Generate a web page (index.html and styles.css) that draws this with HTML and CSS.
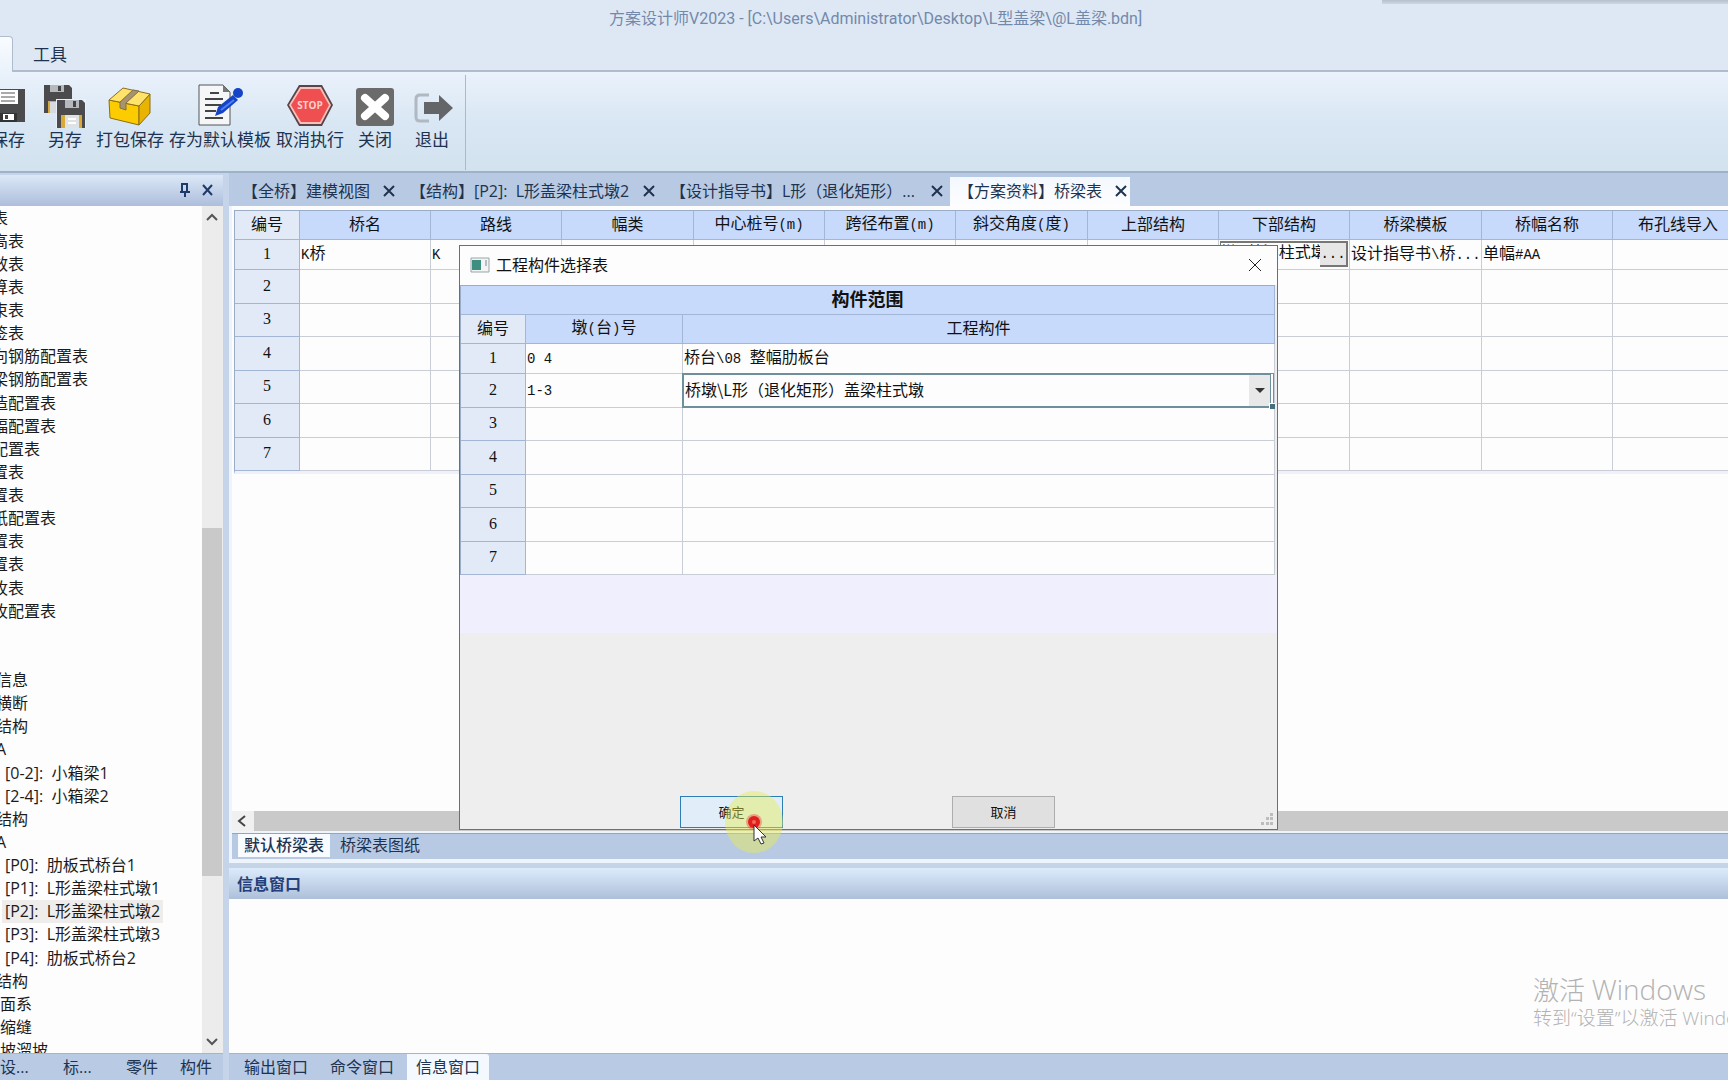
FILE: index.html
```html
<!DOCTYPE html>
<html lang="zh-CN">
<head>
<meta charset="utf-8">
<title>方案设计师V2023</title>
<link rel="stylesheet" href="styles.css">
</head>
<body>
<header class="titlebar">
  <div class="title">方案设计师V2023 - [C:\Users\Administrator\Desktop\L型盖梁\@L盖梁.bdn]</div>
  <nav class="ribbon-tabs">
    <span class="ribbon-tab-active"></span>
    <a class="ribbon-tab" href="#tools">工具</a>
  </nav>
  <div class="screen-edge"></div>
</header>

<div class="ribbon">
  <div class="ribbon-group">
    <button class="tool"><svg width="48" height="44" viewBox="0 0 48 44"><path d="M7 5h34v33H7z" fill="#4b4b4d"/><path d="M14 6h20v14H14z" fill="#fff"/><path d="M17 9h14M17 13h14M17 17h14" stroke="#555"/><path d="M15 29h18v9H15z" fill="#333"/><path d="M19 30h11v6H19z" fill="#fff"/><path d="M21 31h3v4h-3z" fill="#444"/></svg><span>保存</span></button>
    <button class="tool"><svg width="48" height="44" viewBox="0 0 48 44"><path d="M3 1h25l3 3v25H3z" fill="#4b4b4d"/><path d="M9 1h14v7H9z" fill="#b5b8bc"/><path d="M17 2h3v5h-3z" fill="#444"/><path d="M7 17h10v12H7z" fill="#d9a93a"/><path d="M9 18h8v11H9z" fill="#d8dbdd"/><path d="M15 15h30v29H15z" fill="#e9f0f8"/><path d="M16 16h25l3 3v25H16z" fill="#4b4b4d"/><path d="M24 16h14v8H24z" fill="#b5b8bc"/><path d="M32 17h3v6h-3z" fill="#444"/><path d="M20 31h21v13H20z" fill="#d9a93a"/><path d="M24 31h14v13H24z" fill="#dfe2e4"/><path d="M27 35h8M27 39h8" stroke="#fff" stroke-width="2"/></svg><span>另存</span></button>
    <button class="tool"><svg width="48" height="44" viewBox="0 0 48 44"><g stroke="#8a6d1a" stroke-linejoin="round"><path d="M3 16l30 6v19L4 34z" fill="#fccb00"/><path d="M33 22l11-12v19L33 41z" fill="#e9b400"/><path d="M3 16L17 4l27 6-11 12z" fill="#ffe36b"/></g><path d="M14 18l13-12 6 1-13 12v7l-6-2z" fill="#a8946c" stroke="#806d4a"/></svg><span>打包保存</span></button>
    <button class="tool"><svg width="48" height="44" viewBox="0 0 48 44"><path d="M3 1h24l7 7v33H3z" fill="#f4f6f8" stroke="#555"/><path d="M27 1v7h7z" fill="#777"/><path d="M14 9h9M9 15h18M9 21h16M9 27h11M9 34h18" stroke="#444" stroke-width="2"/><path d="M19 32l3-9L37 11l5 5-15 13z" fill="#1443c8"/><circle cx="42" cy="9" r="5" fill="#1443c8"/><path d="M25 26l13-10" stroke="#4e7ff0" stroke-width="2"/></svg><span>存为默认模板</span></button>
    <button class="tool"><svg width="48" height="44" viewBox="0 0 48 44"><path d="M13 1h23l11 20-11 21H13L1 21z" fill="#5a4448"/><path d="M14 3h21l10 18-10 19H14L3 21z" fill="#f9c0bc"/><path d="M15 5h19l9 16-9 17H15L5 21z" fill="#ef4f50"/><text x="24" y="25" text-anchor="middle" class="stop-text">STOP</text></svg><span>取消执行</span></button>
    <button class="tool"><svg width="48" height="44" viewBox="0 0 48 44"><rect x="5" y="4" width="38" height="38" rx="3" fill="#6b6b6c"/><path d="M14 14l20 18M34 14L14 32" stroke="#fff" stroke-width="8" stroke-linecap="round"/></svg><span>关闭</span></button>
    <button class="tool"><svg width="48" height="44" viewBox="0 0 48 44"><path d="M21 11h-9q-4 0-4 4v18q0 4 4 4h9" fill="none" stroke="#b0b8c2" stroke-width="3"/><path d="M16 18h15v-7l14 13-14 13v-7H16z" fill="#646568"/></svg><span>退出</span></button>
  </div>
</div>

<div class="workspace">
  <aside class="side">
    <div class="side-head">
      <svg width="12" height="16" viewBox="0 0 12 16"><path d="M3 9V2h5v7M8 1v8M1 10h10M6 10v5" fill="none" stroke="#1d3a6b" stroke-width="2"/></svg>
      <svg width="12" height="12" viewBox="0 0 12 12"><path d="M1 1l9 10M10 1L1 11" stroke="#1d3a6b" stroke-width="2"/></svg>
    </div>
    <div class="side-body">
      <ul class="tree">
        <li>表</li><li>高表</li><li>效表</li><li>算表</li><li>束表</li><li>签表</li><li>向钢筋配置表</li><li>梁钢筋配置表</li><li>造配置表</li><li>幅配置表</li><li>配置表</li><li>置表</li><li>置表</li><li>纸配置表</li><li>置表</li><li>置表</li><li>枚表</li><li>枚配置表</li><li></li><li></li>
        <li class="l1">信息</li><li class="l1">横断</li><li class="l1">结构</li><li class="l1">A</li>
        <li class="l3">[0-2]:&nbsp; 小箱梁1</li><li class="l3">[2-4]:&nbsp; 小箱梁2</li>
        <li class="l1">结构</li><li class="l1">A</li>
        <li class="l3">[P0]:&nbsp; 肋板式桥台1</li><li class="l3">[P1]:&nbsp; L形盖梁柱式墩1</li><li class="l3"><span class="picked">[P2]:&nbsp; L形盖梁柱式墩2</span></li><li class="l3">[P3]:&nbsp; L形盖梁柱式墩3</li><li class="l3">[P4]:&nbsp; 肋板式桥台2</li>
        <li class="l1">结构</li><li class="l2">面系</li><li class="l2">缩缝</li><li class="l2">坡溜坡</li>
      </ul>
      <div class="vscroll">
        <svg width="20" height="20" viewBox="0 0 20 20"><path d="M5 14l5-5 5 5" fill="none" stroke="#555" stroke-width="2"/></svg>
        <div class="vthumb"></div>
        <svg width="20" height="20" viewBox="0 0 20 20"><path d="M5 6l5 5 5-5" fill="none" stroke="#555" stroke-width="2"/></svg>
      </div>
    </div>
    <nav class="side-tabs"><a href="#s">设...</a><a href="#b">标...</a><a href="#l">零件</a><a href="#g">构件</a></nav>
  </aside>

  <main class="main">
    <nav class="doc-tabs">
      <a href="#t1">【全桥】建模视图<svg width="12" height="12" viewBox="0 0 12 12"><path d="M1 1l10 10M11 1L1 11" stroke="#1f3350" stroke-width="2"/></svg></a>
      <a href="#t2">【结构】[P2]:&nbsp; L形盖梁柱式墩2<svg width="12" height="12" viewBox="0 0 12 12"><path d="M1 1l10 10M11 1L1 11" stroke="#1f3350" stroke-width="2"/></svg></a>
      <a href="#t3">【设计指导书】L形（退化矩形）...<svg width="12" height="12" viewBox="0 0 12 12"><path d="M1 1l10 10M11 1L1 11" stroke="#1f3350" stroke-width="2"/></svg></a>
      <a href="#t4" class="on">【方案资料】桥梁表<svg width="12" height="12" viewBox="0 0 12 12"><path d="M1 1l10 10M11 1L1 11" stroke="#1f3350" stroke-width="2"/></svg></a>
    </nav>
    <div class="sheet">
      <table class="grid bridge">
        <thead><tr><th class="corner">编号</th><th>桥名</th><th>路线</th><th>幅类</th><th>中心桩号<i>(m)</i></th><th>跨径布置<i>(m)</i></th><th>斜交角度<i>(</i>度<i>)</i></th><th>上部结构</th><th>下部结构</th><th>桥梁模板</th><th>桥幅名称</th><th>布孔线导入</th></tr></thead>
        <tbody>
          <tr><th>1</th><td><i>K</i>桥</td><td><i>K</i></td><td></td><td></td><td></td><td></td><td></td><td><div class="editor"><input aria-label="下部结构" value="墩\ 盖梁柱式墩2"><button>...</button></div></td><td>设计指导书<i>\</i>桥<i>...</i></td><td>单幅<i>#AA</i></td><td></td></tr>
          <tr><th>2</th><td></td><td></td><td></td><td></td><td></td><td></td><td></td><td></td><td></td><td></td><td></td></tr>
          <tr><th>3</th><td></td><td></td><td></td><td></td><td></td><td></td><td></td><td></td><td></td><td></td><td></td></tr>
          <tr><th>4</th><td></td><td></td><td></td><td></td><td></td><td></td><td></td><td></td><td></td><td></td><td></td></tr>
          <tr><th>5</th><td></td><td></td><td></td><td></td><td></td><td></td><td></td><td></td><td></td><td></td><td></td></tr>
          <tr><th>6</th><td></td><td></td><td></td><td></td><td></td><td></td><td></td><td></td><td></td><td></td><td></td></tr>
          <tr><th>7</th><td></td><td></td><td></td><td></td><td></td><td></td><td></td><td></td><td></td><td></td><td></td></tr>
        </tbody>
      </table>
    </div>
    <div class="hscroll"><svg width="22" height="20" viewBox="0 0 22 20"><path d="M13 5l-6 5 6 5" fill="none" stroke="#444" stroke-width="2"/></svg></div>
    <nav class="sheet-tabs"><a class="on" href="#d">默认桥梁表</a><a href="#p">桥梁表图纸</a></nav>
    <section class="info">
      <h2>信息窗口</h2>
      <div class="info-body"></div>
    </section>
    <nav class="bottom-tabs"><a href="#o">输出窗口</a><a href="#c">命令窗口</a><a class="on" href="#i">信息窗口</a></nav>
  </main>
</div>

<div class="watermark"><p class="wm-big">激活 <span>Windows</span></p><p>转到“设置”以激活 Windows。</p></div>

<div class="dialog" role="dialog" aria-labelledby="dlg-title">
  <div class="dlg-head">
    <svg width="20" height="16" viewBox="0 0 20 16"><path d="M1 1h18v14H1z" fill="#f4f4f4" stroke="#9aa3a8"/><path d="M2 3h9v10H2z" fill="#3f8f80"/><path d="M16 3v6" stroke="#789"/></svg>
    <span id="dlg-title">工程构件选择表</span>
    <button class="dlg-close" aria-label="close"><svg width="14" height="14" viewBox="0 0 14 14"><path d="M1 1l12 12M13 1L1 13" stroke="#222"/></svg></button>
  </div>
  <table class="grid parts">
    <colgroup><col class="c-no"><col class="c-pier"><col></colgroup>
    <thead>
      <tr><th colspan="3" class="caption">构件范围</th></tr>
      <tr><th class="corner">编号</th><th>墩<i>(</i>台<i>)</i>号</th><th>工程构件</th></tr>
    </thead>
    <tbody>
      <tr><th>1</th><td><i>0 4</i></td><td>桥台<i>\08 </i>整幅肋板台</td></tr>
      <tr><th>2</th><td><i>1-3</i></td><td class="active"><div class="combo"><select aria-label="工程构件"><option>桥墩\L形（退化矩形）盖梁柱式墩</option></select><span class="combo-arrow"></span><span class="handle"></span></div></td></tr>
      <tr><th>3</th><td></td><td></td></tr>
      <tr><th>4</th><td></td><td></td></tr>
      <tr><th>5</th><td></td><td></td></tr>
      <tr><th>6</th><td></td><td></td></tr>
      <tr><th>7</th><td></td><td></td></tr>
    </tbody>
  </table>
  <div class="dlg-fill"></div>
  <div class="dlg-actions"><button class="primary">确定</button><button>取消</button></div>
  <svg class="grip" width="14" height="14" viewBox="0 0 14 14"><path d="M10 1h3v3h-3zM10 5h3v3h-3zM6 5h3v3H6zM10 10h3v3h-3zM6 10h3v3H6zM1 10h3v3H1z" fill="#bdbdbd"/></svg>
</div>

<svg class="pointer" width="62" height="64" viewBox="0 0 62 64"><ellipse cx="31" cy="31" rx="29" ry="31" fill="#e6ea50" fill-opacity=".45"/><circle cx="31" cy="31" r="8" fill="#e83a3a" fill-opacity=".4"/><circle cx="31" cy="31" r="6" fill="#e01f1f"/><circle cx="31" cy="31" r="2" fill="#f06a55"/><path d="M31 34v16l4-3 3 6 3-1-3-6h5z" fill="#fff" stroke="#333"/></svg>
</body>
</html>
```
FILE: styles.css
```css
* { box-sizing: border-box; }

body {
  margin: 0;
  height: 100vh;
  display: flex;
  flex-direction: column;
  overflow: hidden;
  position: relative;
  background: #c5d4e8;
  color: #1d3350;
  font: 16px/22px "Open Sans", "Noto Sans CJK SC", sans-serif;
}

a { color: inherit; text-decoration: none; }
button, input, select { font: inherit; color: inherit; margin: 0; padding: 0; }
svg { display: block; flex: none; }

/* title bar */
.titlebar {
  flex: none;
  height: 72px;
  display: flex;
  flex-direction: column;
  justify-content: space-between;
  position: relative;
  background: #dee8f4;
  border-bottom: 2px solid #afbccb;
}
.title {
  padding: 7px 0 0 609px;
  font: 16px/24px Roboto, "Noto Sans CJK SC", sans-serif;
  color: #7389ab;
  white-space: nowrap;
}
.screen-edge {
  position: absolute;
  top: 0;
  right: 0;
  width: 20%;
  height: 4px;
  background: linear-gradient(#b4bfce, #ced8e4);
}
.ribbon-tabs { display: flex; align-items: stretch; height: 36px; margin-bottom: -2px; }
.ribbon-tab-active {
  width: 13px;
  background: linear-gradient(#f9fcff, #eaf2fb);
  border: 1px solid #afbccb;
  border-width: 1px 1px 0 0;
  border-radius: 0 4px 0 0;
}
.ribbon-tab { padding: 8px 20px 0; font-size: 17px; }

/* ribbon */
.ribbon {
  flex: none;
  height: 101px;
  padding-top: 3px;
  background: linear-gradient(#eaf2fb, #d9e7f4 50%, #d3e2ef);
  border-bottom: 2px solid #9fb2c9;
}
.ribbon-group {
  display: flex;
  gap: 1px;
  width: 486px;
  height: 95px;
  margin-left: -20px;
  padding-top: 9px;
  border-right: 1px solid #a9bacd;
}
.tool {
  display: flex;
  flex-direction: column;
  align-items: center;
  gap: 1px;
  min-width: 56px;
  padding: 0 2px;
  border: 0;
  background: none;
  font-size: 17px;
  white-space: nowrap;
}
.stop-text { font: bold 10px "Open Sans", sans-serif; fill: #fbd0cc; }

.workspace { flex: 1; min-height: 0; display: flex; gap: 6px; }

/* side panel */
.side { flex: none; width: 223px; display: flex; flex-direction: column; overflow: hidden; padding-top: 2px; }
.side-head {
  flex: none;
  height: 31px;
  display: flex;
  align-items: center;
  justify-content: flex-end;
  gap: 11px;
  padding: 0 9px 2px 0;
  background: linear-gradient(#dbe8f8, #aebedb);
}
.side-body { flex: 1; min-height: 0; display: flex; background: #fdfdfd; }
.tree {
  flex: 1;
  margin: 0 0 0 -8px;
  padding: 1px 0 0;
  list-style: none;
  line-height: 23px;
  color: #1b1b1b;
  white-space: nowrap;
  overflow: hidden;
}
.tree li { height: 23px; }
.tree li:nth-child(8n) { height: 24px; }
.tree .l1 { padding-left: 4px; }
.tree .l2 { padding-left: 8px; }
.tree .l3 { padding-left: 13px; }
.picked { display: inline-block; margin-left: -3px; padding: 0 3px; background: #efedeb; }
.vscroll { width: 21px; display: flex; flex-direction: column; background: #ececec; }
.vthumb { flex: 1; margin: 302px 1px 157px 0; background: #c9c9c9; }
.side-tabs {
  flex: none;
  height: 27px;
  display: grid;
  grid-template-columns: 63px 63px 54px 1fr;
  padding-top: 2px;
  border-top: 1px solid #a3b5d0;
  background: #b8cae4;
}

/* document area */
.main { flex: 1; min-width: 0; display: flex; flex-direction: column; background: #eef4fc; }
.doc-tabs {
  flex: none;
  height: 33px;
  display: grid;
  grid-template-columns: 168px 260px 288px 180px;
  padding: 4px 0 0 5px;
  background: #b8cae3;
}
.doc-tabs a {
  display: flex;
  align-items: center;
  justify-content: space-between;
  padding: 0 7px 2px 8px;
  white-space: nowrap;
}
.doc-tabs .on { padding-right: 3px; background: linear-gradient(#f3f8fe, #fdfdff); }

.sheet { flex: 1; min-height: 0; margin: 0 0 0 3px; padding: 4px 0 0 2px; background: #fdfdfd; overflow: hidden; }

.grid {
  border-collapse: separate;
  border-spacing: 0;
  table-layout: fixed;
  border: solid #9badc6;
  border-width: 1px 0 0 1px;
  color: #111;
  background: #fdfdfd;
  line-height: 22px;
  white-space: nowrap;
}
.grid i { font: 14px/22px "Liberation Mono", monospace; white-space: pre; }
.grid th, .grid td { padding: 0 0 2px; border: solid #c9ced6; border-width: 0 1px 1px 0; height: 34px; font-weight: normal; text-align: left; overflow: hidden; }
.grid td { padding-left: 1px; }
.grid thead th { height: 29px; background: #c7dafb; border-color: #a3b6d6; text-align: center; }
.grid tbody th, .grid thead .corner { background: #e1eaf6; border-color: #a3b6d6; text-align: center; }
.grid tbody th { font: 16px/22px "Liberation Serif", serif; }
.grid tbody tr:nth-child(odd) > * { height: 33px; }
.grid tbody tr:first-child > * { height: 30px; }
.bridge { width: 1510px; border-bottom: 3px solid #f0f0fb; }
.bridge thead th { width: 131px; }
.bridge thead th:nth-child(3n+4) { width: 132px; }
.bridge thead .corner { width: 65px; }

.editor { display: flex; height: 26px; margin: 1px 1px 0 0; border: 1px solid #777; border-width: 2px 2px 0 1px; }
.editor input { flex: 1; min-width: 0; height: 16px; border: 0; background: #fdfdfd; line-height: 16px; font-family: "Noto Sans CJK SC", sans-serif; }
.editor button { width: 26px; border: 1px solid #777; border-width: 0 0 2px 0; background: #e6e6e6; font: 14px/16px "Liberation Mono", monospace; }

.hscroll { flex: none; height: 20px; margin: 0 0 2px 3px; display: flex; background: linear-gradient(90deg, #f0f0f0 22px, #c9c9c9 22px); }
.sheet-tabs {
  flex: none;
  height: 26px;
  margin-left: 3px;
  display: flex;
  border-top: 1px solid #8fa5c4;
  background: #b8cae3;
}
.sheet-tabs a { padding: 0 10px; }
.sheet-tabs .on { height: 23px; margin-left: 6px; padding: 0 6px; font-weight: 500; background: #f8fbff; }

.info { flex: none; margin-top: 4px; border-top: 5px solid #c5d5e7; }
.info h2 {
  height: 31px;
  margin: 0;
  padding: 5px 8px;
  font-size: 16px;
  line-height: 22px;
  font-weight: 600;
  color: #24407a;
  background: linear-gradient(#dcebfb, #aebfda);
}
.info-body { height: 154px; background: #fdfdfd; }
.bottom-tabs {
  flex: none;
  height: 27px;
  display: flex;
  border-top: 1px solid #a3b5d0;
  background: #b8cae4;
}
.bottom-tabs a { width: 86px; padding: 2px 0 0 15px; }
.bottom-tabs .on { width: 82px; margin-left: 6px; padding-left: 9px; background: #f4f9ff; border-radius: 0 3px 0 0; }

.watermark { position: absolute; left: 1533px; top: 972px; font: 19px/27px "Open Sans", "Noto Sans CJK SC", sans-serif; font-weight: 300; color: #b2b2b2; white-space: nowrap; }
.watermark p { margin: 0; }
.watermark .wm-big { font-size: 26px; line-height: 34px; margin-bottom: -2px; }
.wm-big span { font-size: 28px; }

/* dialog window */
.dialog {
  position: absolute;
  left: 459px;
  top: 245px;
  width: 819px;
  height: 585px;
  display: flex;
  flex-direction: column;
  border: 1px solid #6e6e74;
  background: #eee;
  color: #111;
}
.dlg-head { flex: none; height: 39px; display: flex; align-items: center; gap: 6px; padding: 0 15px 2px 10px; background: #fdfdfd; }
.dlg-close { margin-left: auto; border: 0; background: none; }
.parts { width: 815px; flex: none; }
.c-no { width: 65px; }
.c-pier { width: 157px; }
.grid .caption { font-size: 18px; font-weight: 700; }
.grid .active { padding: 0; overflow: visible; }
.combo { display: flex; position: relative; height: 35px; margin: -2px 0 -1px -1px; border: 2px solid #6d909c; border-right: 4px double #6d909c; background: #fdfdfd; }
.combo select { flex: 1; appearance: none; border: 0; background: none; padding: 0 0 3px 1px; font-family: "Noto Sans CJK SC", sans-serif; }
.combo-arrow { width: 21px; background: #e8e8e8; display: flex; align-items: center; justify-content: center; }
.combo-arrow::after { content: ""; border: 5px solid transparent; border-top-color: #333; border-bottom: 0; }
.handle { position: absolute; right: -5px; bottom: -3px; width: 6px; height: 6px; background: #47707e; border: solid #fff; border-width: 1px 0 0 1px; }
.dlg-fill { flex: none; height: 58px; background: #efeffd; }
.dlg-actions { margin-top: auto; display: flex; gap: 169px; padding: 0 0 1px 220px; }
.dlg-actions button { width: 103px; height: 32px; border: 1px solid #adadad; background: #e0e0e0; font-size: 13px; }
.dlg-actions .primary { border-color: #2f7db5; background: #e1eefa; }
.grip { position: absolute; right: 3px; bottom: 3px; }

.pointer { position: absolute; left: 723px; top: 791px; }
```
